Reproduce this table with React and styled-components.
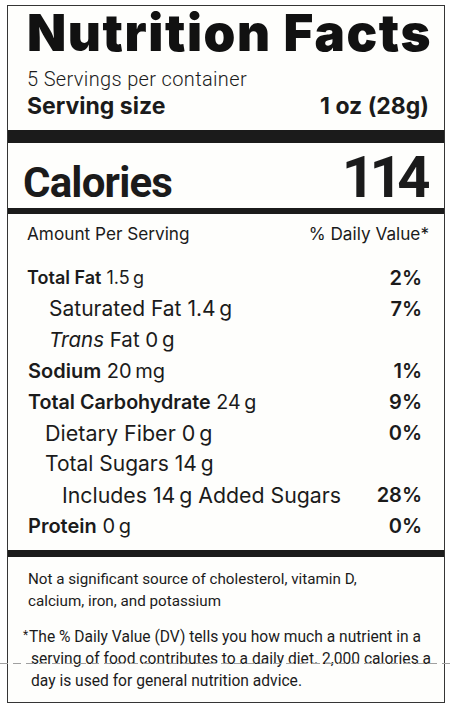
import React from 'react';
import styled, { createGlobalStyle } from 'styled-components';

const GlobalStyle = createGlobalStyle`
  body {
    margin: 0;
    background: #fff;
  }
`;

const Page = styled.div`
  position: relative;
  width: 452px;
  height: 710px;
  padding: 5px 0 0 7px;
  box-sizing: border-box;
  font-family: Inter, Roboto, "Liberation Sans", sans-serif;
  color: #1b1b1b;
`;

const Label = styled.section`
  width: 438px;
  height: 698px;
  box-sizing: border-box;
  border: 1px solid #353535;
  background: #fefefc;
  display: flex;
  flex-direction: column;
`;

const Header = styled.header`
  padding: 4px 15px 0 19px;
`;

const Title = styled.h1`
  margin: 0;
  font-family: Inter, "Liberation Sans", sans-serif;
  font-weight: 900;
  font-size: 51px;
  line-height: 46px;
  letter-spacing: 1.6px;
  white-space: nowrap;
  color: #111;
`;

const Servings = styled.div`
  margin-top: 11px;
  font-family: Roboto, "Liberation Sans", sans-serif;
  font-weight: 300;
  font-size: 20px;
  line-height: 24px;
  letter-spacing: 0.35px;
`;

const ServingSize = styled.div`
  display: flex;
  justify-content: space-between;
  font-size: 23px;
  font-weight: 700;
  line-height: 30px;
`;

const Bar = styled.div`
  height: ${({ $h }) => $h}px;
  margin-top: ${({ $mt }) => $mt || 0}px;
  background: #1b1b1b;
`;

const CaloriesRow = styled.div`
  height: 65px;
  box-sizing: border-box;
  padding: 5px 19px 0 15px;
  display: flex;
  justify-content: space-between;
  align-items: baseline;
  font-family: Roboto, "Liberation Sans", sans-serif;
  font-weight: 700;
`;

const CalLabel = styled.span`
  font-size: 42px;
  line-height: 42px;
  letter-spacing: -0.8px;
`;

const CalValue = styled.span`
  font-size: 58px;
  line-height: 58px;
  letter-spacing: -5.5px;
`;

const AmountHead = styled.div`
  padding: 10px 15px 0 19px;
  display: flex;
  justify-content: space-between;
  font-size: 17.2px;
  line-height: 20px;
`;

const Rows = styled.div`
  padding: 18px 22px 9px 19px;
`;

const Row = styled.div`
  display: flex;
  justify-content: space-between;
  align-items: center;
  height: 31px;
  padding-left: ${({ $indent }) => $indent || 0}px;
  font-size: ${({ $size }) => $size}px;
`;

const Name = styled.span`
  font-weight: ${({ $bold }) => ($bold ? 600 : 400)};
  font-style: ${({ $italic }) => ($italic ? 'italic' : 'normal')};
`;

const Amount = styled.span`
  font-weight: 400;
`;

const Pct = styled.span`
  font-size: 20px;
  font-weight: 600;
`;

const Footer = styled.div`
  padding: 11px 15px 0 20px;
  font-family: Roboto, "Liberation Sans", sans-serif;
  font-size: 15.2px;
  line-height: 22px;
  font-weight: 400;
  white-space: nowrap;
`;

const Note = styled.p`
  margin: 0 0 13px;
`;

const Footnote = styled.p`
  margin: 0;
  padding-left: 3px;
  text-indent: -8px;
  font-size: 15.6px;
  line-height: 21.8px;
`;

const Star = styled.span`
  display: inline-block;
  width: 6px;
  text-indent: 0;
  font-size: 12px;
  vertical-align: 3px;
`;

const Fold = styled.div`
  position: absolute;
  left: 0;
  right: 0;
  top: 663px;
  height: 1px;
  background: repeating-linear-gradient(to right, #a0a0a0 0 8px, transparent 8px 13px);
`;

const rows = [
  { name: 'Total Fat', amount: '1.5\u2009g', pct: '2%', bold: true, size: 18 },
  { name: 'Saturated Fat', amount: '1.4\u2009g', pct: '7%', indent: 22, size: 21 },
  { name: 'Trans', rest: 'Fat', amount: '0\u2009g', indent: 22, italic: true, size: 20.5 },
  { name: 'Sodium', amount: '20\u2009mg', pct: '1%', bold: true, indent: 1, size: 20 },
  { name: 'Total Carbohydrate', amount: '24\u2009g', pct: '9%', bold: true, indent: 1, size: 19.7 },
  { name: 'Dietary Fiber', amount: '0\u2009g', pct: '0%', indent: 18, size: 21.5 },
  { name: 'Total Sugars', amount: '14\u2009g', indent: 18, size: 21 },
  { name: 'Includes 14\u2009g Added Sugars', pct: '28%', indent: 35, size: 21.3 },
  { name: 'Protein', amount: '0\u2009g', pct: '0%', bold: true, indent: 1, size: 20 },
];

export default function App() {
  return (
    <>
      <GlobalStyle />
      <Page>
        <Label>
          <Header>
            <Title>Nutrition Facts</Title>
            <Servings>5 Servings per container</Servings>
            <ServingSize>
              <span>Serving size</span>
              <span>1 oz (28g)</span>
            </ServingSize>
          </Header>
          <Bar $h={13} $mt={9} />
          <CaloriesRow>
            <CalLabel>Calories</CalLabel>
            <CalValue>114</CalValue>
          </CaloriesRow>
          <Bar $h={6} />
          <AmountHead>
            <span>Amount Per Serving</span>
            <span>% Daily Value*</span>
          </AmountHead>
          <Rows>
            {rows.map((r) => (
              <Row key={r.name} $indent={r.indent} $size={r.size}>
                <span>
                  <Name $bold={r.bold} $italic={r.italic}>{r.name}</Name>
                  {r.rest && <Amount> {r.rest}</Amount>}
                  {r.amount && <Amount> {r.amount}</Amount>}
                </span>
                <Pct>{r.pct}</Pct>
              </Row>
            ))}
          </Rows>
          <Bar $h={7} />
          <Footer>
            <Note>
              Not a significant source of cholesterol, vitamin D,
              <br />
              calcium, iron, and potassium
            </Note>
            <Footnote>
              <Star>*</Star>The % Daily Value (DV) tells you how much a nutrient in a
              <br />
              serving of food contributes to a daily diet. 2,000 calories a
              <br />
              day is used for general nutrition advice.
            </Footnote>
          </Footer>
        </Label>
        <Fold />
      </Page>
    </>
  );
}
